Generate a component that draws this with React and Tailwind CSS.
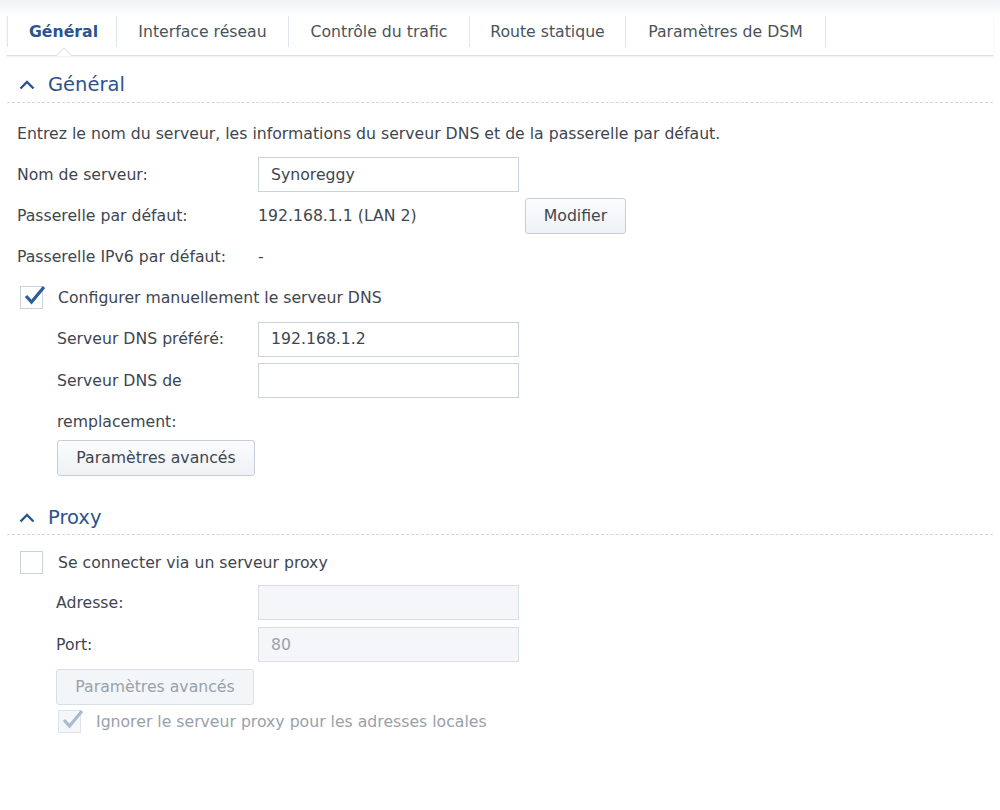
import React from "react";

const font = { fontFamily: '"DejaVu Sans", Verdana, sans-serif' };

function Chevron() {
  return (
    <svg width="16" height="10" viewBox="0 0 16 10" className="-ml-[1px] shrink-0">
      <path d="M1.5 8.5 L8 2 L14.5 8.5" fill="none" stroke="#2a5490" strokeWidth="2.4" />
    </svg>
  );
}

function Check({ color = "#2f5d9a" }) {
  return (
    <svg width="26" height="22" viewBox="0 0 26 22" className="absolute -top-[3px] left-[1px]">
      <path d="M4 12 L9.5 18 L22 3" fill="none" stroke={color} strokeWidth="3.2" strokeLinejoin="miter" />
    </svg>
  );
}

function Checkbox({ checked, disabled }) {
  return (
    <div
      className={
        "relative h-[23px] w-[23px] shrink-0 border " +
        (disabled ? "border-[#dde3ea] bg-[#f4f6f9]" : "border-[#c9d1db] bg-white")
      }
    >
      {checked && <Check color={disabled ? "#a9bbd1" : "#2f5d9a"} />}
    </div>
  );
}

function Input({ value, disabled }) {
  return (
    <div
      className={
        "flex h-[35px] w-[261px] items-center border px-3 " +
        (disabled ? "border-[#d6dee7] bg-[#f4f6f9] text-[#98a1ab]" : "border-[#c9d1db] bg-white text-[#3e4650]")
      }
    >
      {value}
    </div>
  );
}

function Button({ children, disabled, className = "" }) {
  return (
    <div
      className={
        "flex h-[36px] items-center justify-center rounded-[3px] border " +
        (disabled
          ? "border-[#d8dfe7] bg-[#f3f6f9] text-[#98a1ab] "
          : "border-[#c6ced8] bg-gradient-to-b from-[#fbfcfd] to-[#eef2f6] text-[#3e4650] ") +
        className
      }
    >
      {children}
    </div>
  );
}

function SectionHeader({ title, pt = "pt-[8px]" }) {
  return (
    <div className={"mx-[7px] flex h-[44px] items-center gap-[13px] border-b border-dashed border-[#cad8e8] pl-[13px] " + pt}>
      <Chevron />
      <span className="text-[19.5px] text-[#2a5490]">{title}</span>
    </div>
  );
}

const tabs = ["Interface réseau", "Contrôle du trafic", "Route statique", "Paramètres de DSM"];
const tabWidths = ["w-[172px]", "w-[181px]", "w-[156px]", "w-[200px]"];

export default function App() {
  return (
    <div className="h-[810px] w-[1000px] overflow-hidden bg-white text-[15.7px] text-[#3e4650]" style={font}>
      <div className="h-[16px] bg-gradient-to-b from-[#eff2f7] to-white" />
      <div className="relative mx-[7px] flex h-[40px] border-b border-[#dde1e6] shadow-[0_1px_2px_rgba(0,0,0,0.08)]">
        <div className="flex h-[31px] w-[110px] items-center justify-center border-l border-r border-[#dfe5ec] pl-[3px] font-bold text-[#2a5490]">
          Général
        </div>
        {tabs.map((t, i) => (
          <div
            key={t}
            className={"flex h-[31px] items-center justify-center border-r border-[#dfe5ec] text-[#4a525c] " + tabWidths[i]}
          >
            {t}
          </div>
        ))}
        <div className="absolute -bottom-[1px] left-[48px] h-[9px] w-[18px] overflow-hidden">
          <div className="absolute left-[3px] top-[3px] h-[12px] w-[12px] rotate-45 border-l border-t border-[#dde1e6] bg-white" />
        </div>
      </div>

      <div className="mt-[3px]">
        <SectionHeader title="Général" />
      </div>

      <div className="pl-[17px]">
        <div className="mt-[21px] flex h-[20px] items-center">
          Entrez le nom du serveur, les informations du serveur DNS et de la passerelle par défaut.
        </div>

        <div className="mt-[13px] flex items-center">
          <div className="w-[241px]">Nom de serveur:</div>
          <Input value="Synoreggy" />
        </div>
        <div className="mt-[6px] flex items-center">
          <div className="w-[241px]">Passerelle par défaut:</div>
          <div className="w-[267px]">192.168.1.1 (LAN 2)</div>
          <Button className="w-[101px]">Modifier</Button>
        </div>
        <div className="mt-[5px] flex h-[36px] items-center">
          <div className="w-[241px]">Passerelle IPv6 par défaut:</div>
          <div>-</div>
        </div>

        <div className="mt-[11px] flex items-center pl-[3px]">
          <Checkbox checked />
          <span className="ml-[15px]">Configurer manuellement le serveur DNS</span>
        </div>

        <div className="pl-[40px]">
          <div className="mt-[12px] flex items-center">
            <div className="w-[201px]">Serveur DNS préféré:</div>
            <Input value="192.168.1.2" />
          </div>
          <div className="mt-[6px] flex items-start">
            <div className="-mt-[3px] w-[201px] leading-[41px]">
              Serveur DNS de
              <br />
              remplacement:
            </div>
            <Input value="" />
          </div>
          <Button className="-mt-[2px] w-[198px]">Paramètres avancés</Button>
        </div>
      </div>

      <div className="mt-[15px]">
        <SectionHeader title="Proxy" pt="pt-[11px]" />
      </div>

      <div className="pl-[17px]">
        <div className="mt-[16px] flex items-center pl-[3px]">
          <Checkbox />
          <span className="ml-[15px]">Se connecter via un serveur proxy</span>
        </div>
        <div className="pl-[39px]">
          <div className="mt-[11px] flex items-center">
            <div className="w-[202px]">Adresse:</div>
            <Input value="" disabled />
          </div>
          <div className="mt-[7px] flex items-center">
            <div className="w-[202px]">Port:</div>
            <Input value="80" disabled />
          </div>
          <Button disabled className="mt-[7px] w-[198px]">
            Paramètres avancés
          </Button>
          <div className="mt-[5px] flex items-center pl-[2px]">
            <Checkbox checked disabled />
            <span className="ml-[15px] text-[#98a1ab]">Ignorer le serveur proxy pour les adresses locales</span>
          </div>
        </div>
      </div>
    </div>
  );
}
